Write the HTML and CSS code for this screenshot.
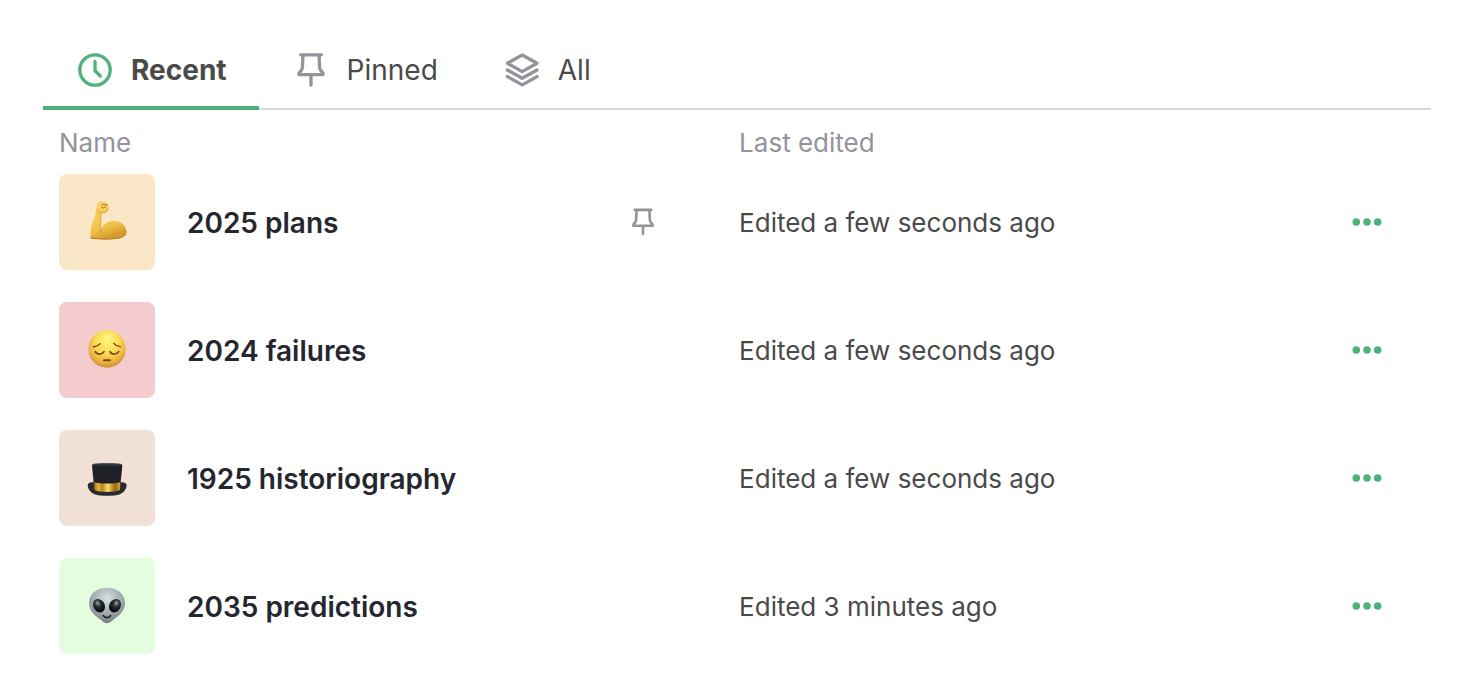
FILE: index.html
```html
<!DOCTYPE html>
<html lang="en">
<head>
<meta charset="utf-8">
<meta name="viewport" content="width=device-width, initial-scale=1">
<title>Recent documents</title>
<link rel="stylesheet" href="styles.css">
</head>
<body>
<svg class="defs" width="0" height="0" aria-hidden="true">
  <defs>
    <symbol id="pin" viewBox="0 0 40 40">
      <path d="M9.700 4.800h20.600M12 5l-.6 12.500c-.1 1.500-.6 2.300-1.500 3.300L8 23.200v1.500h24v-1.500l-1.900-2.400c-.9-1-1.400-1.800-1.500-3.300L28 5M20 25.200V35"/>
    </symbol>
    <symbol id="dots" viewBox="0 0 32 32">
      <circle cx="5.300" cy="16" r="3.800"/><circle cx="16" cy="16" r="3.800"/><circle cx="26.700" cy="16" r="3.800"/>
    </symbol>
    <linearGradient id="arm" x1="0" y1="0" x2=".3" y2="1"><stop offset="0" stop-color="#fbd66e"/><stop offset=".75" stop-color="#f0c248"/><stop offset="1" stop-color="#d39a2c"/></linearGradient>
    <radialGradient id="face" cx=".5" cy=".4" r=".62" fy=".2"><stop offset="0" stop-color="#fff685"/><stop offset=".5" stop-color="#fbdc55"/><stop offset=".8" stop-color="#edb342"/><stop offset="1" stop-color="#cc8a35"/></radialGradient>
    <linearGradient id="band" x1="0" x2="1"><stop offset="0" stop-color="#9b6c12"/><stop offset=".16" stop-color="#e3b43a"/><stop offset=".32" stop-color="#b98a1c"/><stop offset=".52" stop-color="#f9df6b"/><stop offset=".8" stop-color="#9b6810"/><stop offset="1" stop-color="#d5a630"/></linearGradient>
    <linearGradient id="felt" x1="0" y1="0" x2="0" y2="1"><stop offset="0" stop-color="#343b40"/><stop offset=".2" stop-color="#1d2025"/><stop offset="1" stop-color="#202127"/></linearGradient>
    <radialGradient id="skin" cx=".5" cy=".3" r=".65"><stop offset="0" stop-color="#d5e2e4"/><stop offset=".6" stop-color="#a3aeb2"/><stop offset="1" stop-color="#7c8589"/></radialGradient>
    <radialGradient id="eye" cx=".5" cy=".3" r=".6"><stop offset="0" stop-color="#a5aaad"/><stop offset=".4" stop-color="#303437"/><stop offset="1" stop-color="#080a0b"/></radialGradient>
  </defs>
</svg>
<main class="documents">
  <nav class="tabs" aria-label="Documents">
    <button class="tab tab-active" type="button">
      <svg class="tab-icon" viewBox="0 0 40 40" aria-hidden="true"><circle cx="20" cy="20" r="15.200"/><path d="M20 11.500v9.300l5.300 5.200"/></svg>
      Recent
    </button>
    <button class="tab" type="button">
      <svg class="tab-icon" aria-hidden="true"><use href="#pin"/></svg>
      Pinned
    </button>
    <button class="tab" type="button">
      <svg class="tab-icon" viewBox="0 0 40 40" aria-hidden="true"><path d="M20.200 5 35 13.300 20.200 21.600 5.400 13.300zM5.400 20l14.800 8.300L35 20M5.400 26.600l14.800 8.300L35 26.600"/></svg>
      All
    </button>
  </nav>
  <table class="list">
    <thead>
      <tr><th class="col-name" scope="col">Name</th><th class="col-edited" scope="col">Last edited</th><th class="col-menu"></th></tr>
    </thead>
    <tbody>
      <tr>
        <td><div class="document">
          <svg class="tile tile-yellow" viewBox="12 12 288 288" role="img" aria-label="Flexed arm">
            <path d="M127 98c5-5 13-4 18-2 6-2 10 1 12 4 5 4 5 12 3 18-1 5-6 10-12 12l-10 1c1 16 1 32-1 47 8-15 20-24 39-25 22 0 38 14 38 32 0 11-9 17-21 20-26 5-58 3-86 0-2-20 2-40 9-57 7-13 6-21 7-33z" fill="url(#arm)"/>
            <path d="M137 132c0 16 1 31-2 48 0 4 0 7 2 9 0-5 2-9 5-12" fill="none" stroke="#cb9434" stroke-width="2" stroke-linecap="round"/>
            <path d="M107 204c27 4 60 5 84 0 14-3 21-9 22-19" fill="none" stroke="#b97924" stroke-width="3" stroke-linecap="round"/>
            <path d="M127 122c4 6 12 7 20 6 7-2 11-6 13-12" fill="none" stroke="#c28d2b" stroke-width="2" stroke-linecap="round"/>
            <path d="M141 104c4-2 8-1 10 2m1-3 5 2m-18 7c5 3 10 2 13-2" fill="none" stroke="#b57a1b" stroke-width="3" stroke-linecap="round"/>
          </svg>
          <a class="title" href="#plans">2025 plans</a>
          <svg class="pinned" role="img" aria-label="Pinned"><use href="#pin"/></svg>
        </div></td>
        <td>Edited a few seconds ago</td>
        <td><button class="menu" type="button" aria-label="Options for 2025 plans"><svg class="dots"><use href="#dots"/></svg></button></td>
      </tr>
      <tr>
        <td><div class="document">
          <svg class="tile tile-pink" viewBox="12 12 288 288" role="img" aria-label="Pensive face">
            <circle cx="156" cy="153" r="56" fill="url(#face)"/>
            <g fill="none" stroke="#784314" stroke-width="4" stroke-linecap="round"><path d="M115 147c9-1 16-4 21-10M176 136c5 6 12 9 20 10"/><path d="M121 161c4 9 20 10 26 0M165 161c5 10 21 9 26 0" stroke-width="5"/><path d="M147 187h18" stroke-width="6"/></g>
          </svg>
          <a class="title" href="#failures">2024 failures</a>
        </div></td>
        <td>Edited a few seconds ago</td>
        <td><button class="menu" type="button" aria-label="Options for 2024 failures"><svg class="dots"><use href="#dots"/></svg></button></td>
      </tr>
      <tr>
        <td><div class="document">
          <svg class="tile tile-brown" viewBox="12 12 288 288" role="img" aria-label="Top hat">
            <path d="M98 177c1-7 8-9 17-8l41 5 41-5c9-1 17 1 18 8 0 12-7 21-20 28-18 6-59 6-77 0-13-7-20-16-20-28z" fill="#292b30"/>
            <path d="M111 116c2-6 88-6 91 0-1 19-4 38-5 56-16 7-65 7-81 0-1-18-4-37-5-56z" fill="url(#felt)"/>
            <path d="M117 169c18 5 61 5 79 0l-1 23c-16 8-61 8-77 0z" fill="url(#band)"/>
            <path d="M114 115c19-3 65-3 85 0" fill="none" stroke="#4b5054" stroke-width="2"/>
          </svg>
          <a class="title" href="#historiography">1925 historiography</a>
        </div></td>
        <td>Edited a few seconds ago</td>
        <td><button class="menu" type="button" aria-label="Options for 1925 historiography"><svg class="dots"><use href="#dots"/></svg></button></td>
      </tr>
      <tr>
        <td><div class="document">
          <svg class="tile tile-green" viewBox="12 12 288 288" role="img" aria-label="Alien">
            <path d="M156 101c31 0 54 18 54 47 0 24-18 37-37 51-6 5-11 9-17 9s-11-4-17-9c-19-14-37-27-37-51 0-29 23-47 54-47z" fill="url(#skin)"/>
            <ellipse cx="132" cy="155" rx="17" ry="21" transform="rotate(-30 132 155)" fill="url(#eye)"/>
            <ellipse cx="180" cy="155" rx="17" ry="21" transform="rotate(30 180 155)" fill="url(#eye)"/>
            <path d="M145 185c5 8 17 8 22 0" fill="none" stroke="#1c2022" stroke-width="5" stroke-linecap="round"/>
          </svg>
          <a class="title" href="#predictions">2035 predictions</a>
        </div></td>
        <td>Edited 3 minutes ago</td>
        <td><button class="menu" type="button" aria-label="Options for 2035 predictions"><svg class="dots"><use href="#dots"/></svg></button></td>
      </tr>
    </tbody>
  </table>
</main>
</body>
</html>
```
FILE: styles.css
```css
* { box-sizing: border-box; }
body {
  margin: 0;
  background: #fff;
  color: #4a4a4a;
  font-family: Inter, "Liberation Sans", sans-serif;
  font-size: 26px;
  line-height: 32px;
}
button { font: inherit; color: inherit; background: none; border: 0; cursor: pointer; }
.defs { display: block; }
.documents { padding: 30px 40px 0 43px; }
.tabs {
  display: flex;
  height: 80px;
  box-shadow: inset 0 -2px #d8d8d9;
}
.tab {
  display: flex;
  align-items: center;
  gap: 16px;
  padding: 4px 32px 0;
  border-bottom: 4px solid transparent;
  font-size: 28px;
}
.tab-active { font-weight: 700; border-color: #50b17d; }
.tab-icon, .pinned {
  flex: none;
  width: 40px;
  height: 40px;
  fill: none;
  stroke: #93939a;
  stroke-width: 3.3;
  stroke-linecap: round;
  stroke-linejoin: round;
}
.tab-active .tab-icon { stroke: #50b17d; }
.list { width: 100%; table-layout: fixed; border-collapse: collapse; }
th {
  padding: 18px 16px 0;
  color: #93939a;
  font-weight: 400;
  line-height: 30px;
  text-align: left;
}
td { padding: 16px; }
td:nth-child(2) { padding: 18px 16px 16px; }
.col-name { width: 49%; }
.col-menu { width: 128px; }
.document { display: flex; align-items: center; }
.tile { flex: none; width: 96px; height: 96px; margin-right: 32px; border-radius: 8px; }
.tile-yellow { background: #fae7c8; }
.tile-pink { background: #f4cccd; }
.tile-brown { background: #f0e0d5; }
.tile-green { background: #e5fddf; }
.title { padding-top: 2px; color: #26262f; font-size: 28px; font-weight: 600; text-decoration: none; }
.pinned { width: 32px; height: 32px; margin: 0 48px 0 auto; }
.menu { display: flex; padding: 8px; margin-left: 24px; }
.dots { width: 32px; height: 32px; fill: #50b17d; }
```
